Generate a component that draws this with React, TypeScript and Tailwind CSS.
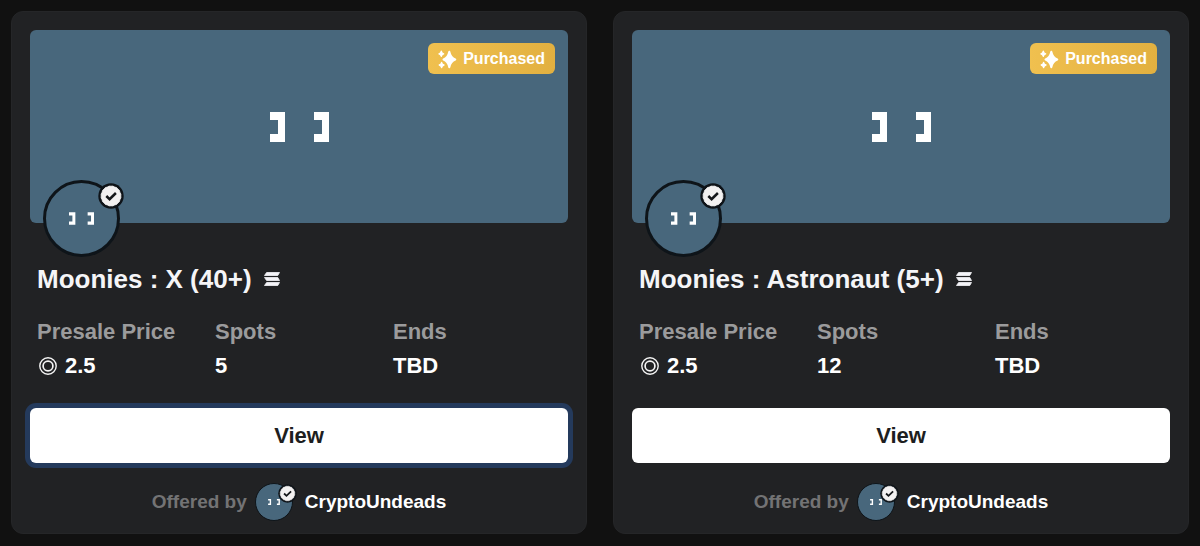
import React from "react";

type Offer = {
  title: string;
  price: string;
  spots: string;
  ends: string;
  seller: string;
  focused?: boolean;
};

const offers: Offer[] = [
  { title: "Moonies : X (40+)", price: "2.5", spots: "5", ends: "TBD", seller: "CryptoUndeads", focused: true },
  { title: "Moonies : Astronaut (5+)", price: "2.5", spots: "12", ends: "TBD", seller: "CryptoUndeads" },
];

function Eyes({ className }: { className: string }) {
  return (
    <svg viewBox="0 0 59 30" className={className} fill="#fff" aria-hidden="true">
      <path d="M0 0h15v30H0v-8h8V8H0z" />
      <path d="M44 0h15v30H44v-8h8V8H44z" />
    </svg>
  );
}

function Verified({ className }: { className: string }) {
  return (
    <svg viewBox="0 0 26 26" className={className} aria-hidden="true">
      <circle cx="13" cy="13" r="12.7" fill="#0e1318" />
      <path
        d="M13 3.200Q15 2.600 16.700 4.100Q19 4.100 19.900 6.100Q21.900 7 21.900 9.300Q23.400 11 22.800 13Q23.400 15 21.900 16.700Q21.900 19 19.900 19.900Q19 21.900 16.700 21.900Q15 23.400 13 22.800Q11 23.400 9.300 21.900Q7 21.900 6.100 19.900Q4.100 19 4.100 16.700Q2.600 15 3.200 13Q2.600 11 4.100 9.300Q4.100 7 6.100 6.100Q7 4.100 9.300 4.100Q11 2.600 13 3.200Z"
        fill="#f3f1f1"
        stroke="#f3f1f1"
        strokeWidth=".8"
        strokeLinejoin="round"
      />
      <path d="M8.300 13l3.300 3.200 6.300-6.200" fill="none" stroke="#15171a" strokeWidth="2.500" />
    </svg>
  );
}

function Sparkles() {
  return (
    <svg viewBox="0 0 20 20" className="size-5" fill="#fff" stroke="#fff" strokeLinejoin="round" aria-hidden="true">
      <path d="M12.300 2.800Q13.600 9 18.300 10.500Q13.600 12 12.300 18.200Q11 12 6.500 10.500Q11 9 12.300 2.800Z" strokeWidth="2" />
      <path d="M4.300 2.200Q4.700 4.400 6.700 4.800Q4.700 5.200 4.300 7.400Q3.900 5.200 1.900 4.800Q3.900 4.400 4.300 2.200Z" strokeWidth="1.300" />
      <path d="M4.600 13.400Q5 15.600 7 16Q5 16.400 4.600 18.600Q4.200 16.400 2.200 16Q4.200 15.600 4.600 13.400Z" strokeWidth="1.300" />
    </svg>
  );
}

function Solana() {
  return (
    <svg
      viewBox="0 0 16 14"
      className="h-[14px] w-4"
      fill="#f4f4f8"
      stroke="#f4f4f8"
      strokeWidth=".8"
      strokeLinejoin="round"
      aria-hidden="true"
    >
      <path d="M2.600.5H15.500L13.800 3.500H.5z" />
      <path d="M.5 5.500H13.800L15.500 8.500H2.600z" />
      <path d="M2.600 10.500H15.500L13.800 13.500H.5z" />
    </svg>
  );
}

function Coin() {
  return (
    <svg viewBox="0 0 18 18" className="size-[18px]" fill="none" stroke="#f4f4f4" aria-hidden="true">
      <circle cx="9" cy="9" r="8.200" strokeWidth="1.400" />
      <circle cx="9" cy="9" r="4.900" strokeWidth="1.700" />
    </svg>
  );
}

function Stat({ label, children }: { label: string; children: React.ReactNode }) {
  return (
    <div>
      <dt className="text-[#9b9b9c]">{label}</dt>
      <dd className="flex items-center gap-2 text-white">{children}</dd>
    </div>
  );
}

function OfferCard({ offer }: { offer: Offer }) {
  return (
    <article className="min-w-0 rounded-xl border border-[#252628] bg-[#212224] px-[18px] pt-[18px] pb-3">
      <div className="relative flex h-[193px] items-center justify-center rounded-md bg-[#48677c]">
        <Eyes className="h-[30px] w-[59px]" />
        <span className="absolute top-[13px] right-[13px] flex h-[31px] items-center gap-[6px] rounded-md bg-linear-to-r from-[#f0c04f] to-[#e2b040] pr-[10px] pl-[9px] text-base text-white">
          <Sparkles />
          Purchased
        </span>
        <div className="absolute top-[150px] left-[13px] flex size-[77px] items-center justify-center rounded-full border-3 border-[#0e1419] bg-[#48677c]">
          <Eyes className="h-[13px] w-[25px]" />
          <Verified className="absolute top-0 right-[-7px] size-[26px]" />
        </div>
      </div>
      <h2 className="mt-10 flex items-center gap-3 pl-[7px] text-[26px] leading-8 text-[#f5f5f7]">
        {offer.title}
        <Solana />
      </h2>
      <dl className="mt-5 grid grid-cols-3 gap-[10px] px-[7px] text-[22px] leading-[34px]">
        <Stat label="Presale Price">
          <span className="flex pl-0.5">
            <Coin />
          </span>
          {offer.price}
        </Stat>
        <Stat label="Spots">{offer.spots}</Stat>
        <Stat label="Ends">{offer.ends}</Stat>
      </dl>
      <button
        type="button"
        className={`mt-[25px] h-[55px] w-full rounded-md bg-white text-[22px] text-[#1d1e20] ${
          offer.focused ? "ring-5 ring-[#243a5c]" : ""
        }`}
      >
        View
      </button>
      <div className="mt-5 flex items-center justify-center text-[19px] leading-[38px]">
        <span className="text-[#737374]">Offered by</span>
        <span className="relative ml-2 flex size-[38px] items-center justify-center rounded-full border border-[#0e1419] bg-[#48677c]">
          <Eyes className="h-[6px] w-3" />
          <Verified className="absolute top-0 right-[-5px] size-[19px]" />
        </span>
        <a href="#" className="ml-3 text-white">
          {offer.seller}
        </a>
      </div>
    </article>
  );
}

export default function App() {
  return (
    <main className="grid min-h-screen grid-cols-2 items-start gap-[26px] bg-[#111111] p-[11px] font-['Liberation_Sans',Arial,sans-serif] font-bold">
      {offers.map((offer) => (
        <OfferCard key={offer.title} offer={offer} />
      ))}
    </main>
  );
}
